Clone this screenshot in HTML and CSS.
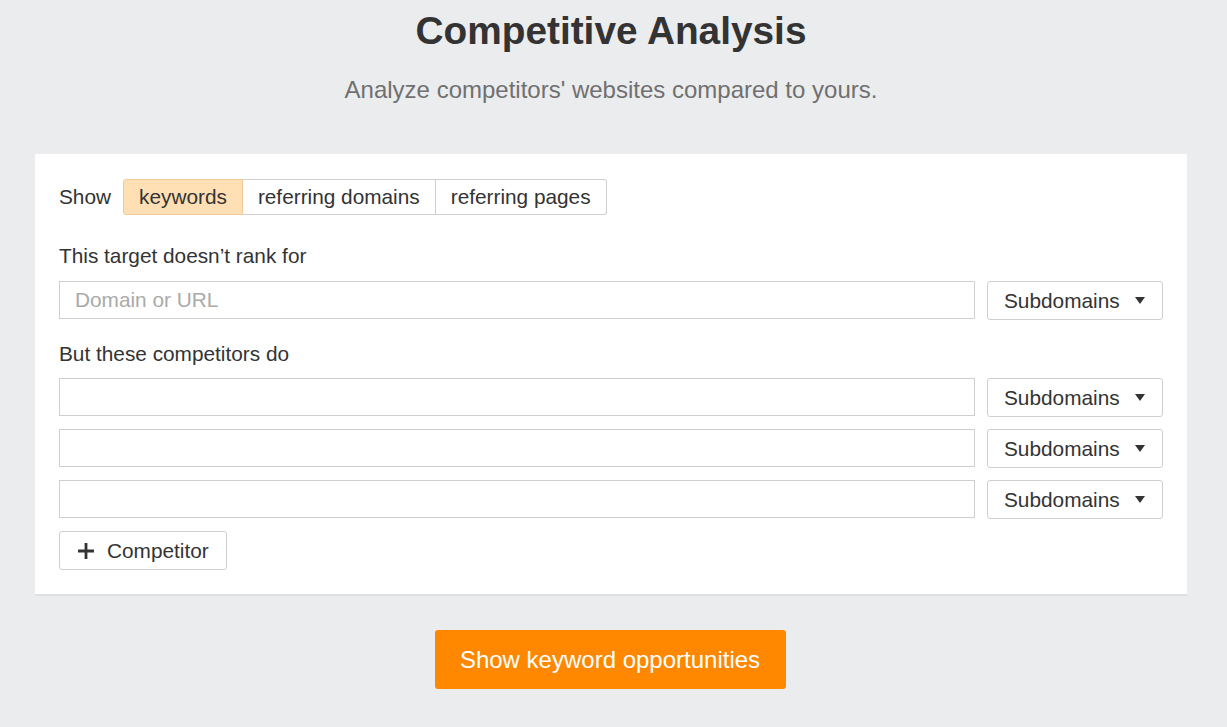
FILE: index.html
```html
<!DOCTYPE html>
<html lang="en">
<head>
  <meta charset="UTF-8">
  <title>Competitive Analysis</title>
  <link rel="stylesheet" href="styles.css">
</head>
<body>
  <header class="intro">
    <h1>Competitive Analysis</h1>
    <p>Analyze competitors' websites compared to yours.</p>
  </header>

  <main class="card">
    <div class="show-row">
      <span>Show</span>
      <div class="segments">
        <button class="active">keywords</button>
        <button>referring domains</button>
        <button>referring pages</button>
      </div>
    </div>

    <label class="field-label">This target doesn’t rank for</label>
    <div class="row">
      <input type="text" placeholder="Domain or URL">
      <button class="mode">Subdomains <span class="caret"></span></button>
    </div>

    <label class="field-label second">But these competitors do</label>
    <div class="rows">
      <div class="row">
        <input type="text">
        <button class="mode">Subdomains <span class="caret"></span></button>
      </div>
      <div class="row">
        <input type="text">
        <button class="mode">Subdomains <span class="caret"></span></button>
      </div>
      <div class="row">
        <input type="text">
        <button class="mode">Subdomains <span class="caret"></span></button>
      </div>
      <div>
        <button class="add">
          <svg width="18" height="18" viewBox="0 0 18 18"><path d="M9 1v16M1 9h16" stroke="#333" stroke-width="2.8"/></svg>
          Competitor
        </button>
      </div>
    </div>
  </main>

  <div class="submit">
    <button>Show keyword opportunities</button>
  </div>
</body>
</html>
```

FILE: styles.css
```css
body {
  font-family: "Liberation Sans", Arial, sans-serif;
  background: #ebecee;
  color: #333;
  margin: 0;
  padding: 0 40px 0 35px;
}
button, input {
  font-family: inherit;
  color: #333;
}
.intro {
  text-align: center;
}
.intro h1 {
  margin: 0;
  padding-top: 7px;
  font-size: 38.8px;
  line-height: 48px;
}
.intro p {
  margin: 20px 0 0;
  font-size: 24px;
  line-height: 30px;
  color: #707070;
}
.card {
  margin-top: 49px;
  background: #fff;
  padding: 25px 24px 24px;
  border-bottom: 2px solid #dfe0e3;
}
.show-row {
  display: flex;
  align-items: center;
  gap: 12px;
  font-size: 20.8px;
}
.segments {
  display: flex;
}
.segments button {
  background: #fff;
  border: 1px solid #cfcfcf;
  border-left: none;
  height: 36px;
  padding: 0 15px;
  font-size: 20.8px;
}
.segments button:first-child {
  border-left: 1px solid #f3c99a;
  border-radius: 3px 0 0 3px;
}
.segments button:last-child {
  border-radius: 0 3px 3px 0;
}
.segments button.active {
  background: #ffdfb3;
  border-color: #f3c99a;
}
.field-label {
  display: block;
  font-size: 20.8px;
  line-height: 24px;
  margin: 29px 0 13px;
}
.field-label.second {
  margin: 22px 0 12px;
}
.row {
  display: flex;
  gap: 12px;
}
.rows {
  display: flex;
  flex-direction: column;
  gap: 12px;
}
.row input {
  flex: 1;
  height: 38px;
  box-sizing: border-box;
  border: 1px solid #cfcfcf;
  padding: 0 15px;
  font-size: 20.8px;
  margin: 0;
}
.row input::placeholder {
  color: #aaa;
}
.mode {
  width: 176px;
  height: 39px;
  background: #fff;
  border: 1px solid #cfcfcf;
  border-radius: 3px;
  font-size: 20.8px;
  display: flex;
  align-items: center;
  justify-content: space-between;
  padding: 0 17px 0 16px;
}
.caret {
  width: 0;
  height: 0;
  border-left: 5.5px solid transparent;
  border-right: 5.5px solid transparent;
  border-top: 7px solid #333;
}
.add {
  height: 39px;
  background: #fff;
  border: 1px solid #cfcfcf;
  border-radius: 3px;
  font-size: 20.8px;
  display: inline-flex;
  align-items: center;
  gap: 12px;
  padding: 0 17px 0 17px;
}
.submit {
  display: flex;
  justify-content: center;
  margin-top: 34px;
  padding-right: 2px;
}
.submit button {
  background: #ff8800;
  color: #fff;
  border: none;
  border-radius: 3px;
  height: 59px;
  width: 351px;
  font-size: 24px;
}
```
